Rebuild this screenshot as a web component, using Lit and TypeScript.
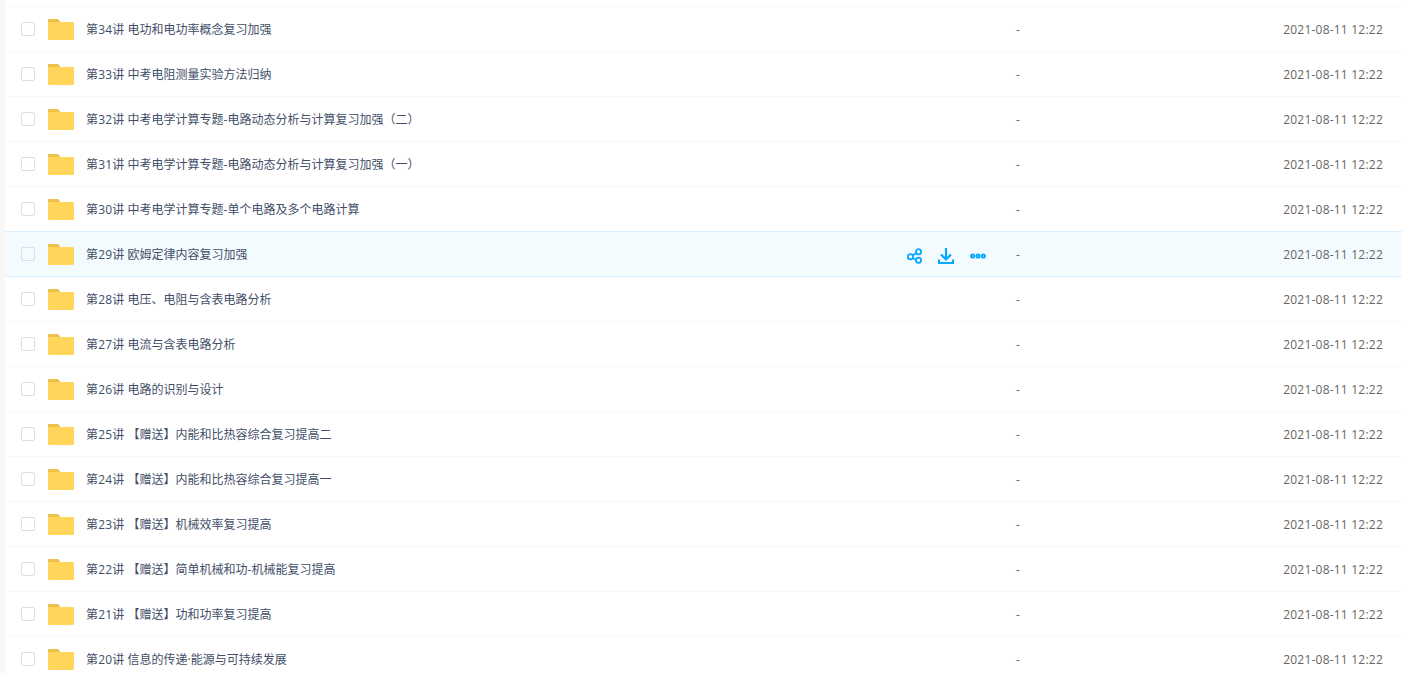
import { LitElement, html, css } from "lit";
import { customElement } from "lit/decorators.js";

const ROWS: [string, string][] = [
  ["第34讲 ", "电功和电功率概念复习加强"],
  ["第33讲 ", "中考电阻测量实验方法归纳"],
  ["第32讲 ", "中考电学计算专题-电路动态分析与计算复习加强（二）"],
  ["第31讲 ", "中考电学计算专题-电路动态分析与计算复习加强（一）"],
  ["第30讲 ", "中考电学计算专题-单个电路及多个电路计算"],
  ["第29讲 ", "欧姆定律内容复习加强"],
  ["第28讲 ", "电压、电阻与含表电路分析"],
  ["第27讲 ", "电流与含表电路分析"],
  ["第26讲 ", "电路的识别与设计"],
  ["第25讲 ", "【赠送】内能和比热容综合复习提高二"],
  ["第24讲 ", "【赠送】内能和比热容综合复习提高一"],
  ["第23讲 ", "【赠送】机械效率复习提高"],
  ["第22讲 ", "【赠送】简单机械和功-机械能复习提高"],
  ["第21讲 ", "【赠送】功和功率复习提高"],
  ["第20讲 ", "信息的传递·能源与可持续发展"],
];

@customElement("app-root")
export class AppRoot extends LitElement {
  static styles = css`
    :host {
      display: block;
      height: 673px;
      overflow: hidden;
      background: #f7f7f7;
      font-family: "Open Sans", "Noto Sans CJK SC", sans-serif;
      font-size: 12px;
      color: #424e67;
    }
    .list {
      margin-left: 5px;
      background: #fff;
      height: 673px;
      padding-top: 6px;
      box-sizing: border-box;
    }
    .row {
      display: flex;
      align-items: center;
      height: 45px;
      box-sizing: border-box;
      border-top: 1px solid #f4f7fc;
    }
    .row.hover {
      background: #f4fbff;
      border-top-color: #dbeeff;
    }
    .row.after-hover {
      border-top-color: #dbeeff;
    }
    .check {
      width: 14px;
      height: 14px;
      margin-left: 16px;
      box-sizing: border-box;
      border: 1px solid #dadfe9;
      border-radius: 2px;
      flex: none;
    }
    .folder {
      margin-left: 13px;
      margin-top: 1px;
      width: 26px;
      height: 21px;
      flex: none;
      display: block;
    }
    .name {
      margin-left: 12px;
      margin-top: 2px;
      flex: 1;
      white-space: nowrap;
      line-height: 16px;
    }
    .prefix {
      letter-spacing: 0.15px;
    }
    .actions {
      display: flex;
      align-items: center;
      width: 110px;
      flex: none;
      gap: 16px;
      padding-left: 1px;
      margin-top: 4px;
      box-sizing: border-box;
    }
    .actions svg { display: block; flex: none; width: 16px; height: 16px; }
    .size {
      width: 268px;
      padding-left: 1px;
      box-sizing: border-box;
      flex: none;
      color: #666;
    }
    .date {
      width: 100px;
      margin-right: 19px;
      flex: none;
      color: #666;
      text-align: right;
      white-space: nowrap;
      letter-spacing: 0.22px;
    }
  `;

  private folder() {
    return html`<svg class="folder" viewBox="0 0 26 21">
      <path fill="#edbf4b" d="M0 5V1.200C0 .5.500 0 1.200 0h8c.8 0 1.300.3 1.800.9L12.200 3v2z"/>
      <path fill="#ffd659" d="M0 3h24.800c.7 0 1.200.5 1.200 1.200v15.600c0 .7-.5 1.200-1.200 1.200H1.200C.5 21 0 20.500 0 19.800z"/>
    </svg>`;
  }

  private actions() {
    return html`<div class="actions">
      <svg viewBox="0 0 16 16" fill="none" stroke="#06a7ff" stroke-width="1.800">
        <circle cx="4.500" cy="8.700" r="2.600"/>
        <circle cx="12.500" cy="3.700" r="2.600"/>
        <circle cx="12.500" cy="12.300" r="2.600"/>
        <path d="M6.800 7.300l3.500-2.200M6.800 10l3.500 2"/>
      </svg>
      <svg viewBox="0 0 16 16" fill="none" stroke="#06a7ff" stroke-width="2.200">
        <path d="M8 0v11"/>
        <path d="M3 6.500l5 5 5-5"/>
        <path d="M1 11.500V15h14v-3.500"/>
      </svg>
      <svg viewBox="0 0 16 16" fill="#7fd0ff" stroke="#06a7ff" stroke-width="1.700">
        <circle cx="2.600" cy="8" r="1.700"/>
        <circle cx="8" cy="8" r="1.700"/>
        <circle cx="13.400" cy="8" r="1.700"/>
      </svg>
    </div>`;
  }

  render() {
    return html`<div class="list">
      ${ROWS.map(
        ([prefix, name], i) => html`<div class="row ${i === 5 ? "hover" : ""} ${i === 6 ? "after-hover" : ""}">
          <span class="check"></span>
          ${this.folder()}
          <span class="name"><span class="prefix">${prefix}</span>${name}</span>
          ${i === 5 ? this.actions() : html`<div class="actions"></div>`}
          <span class="size">-</span>
          <span class="date">2021-08-11 12:22</span>
        </div>`
      )}
    </div>`;
  }
}
